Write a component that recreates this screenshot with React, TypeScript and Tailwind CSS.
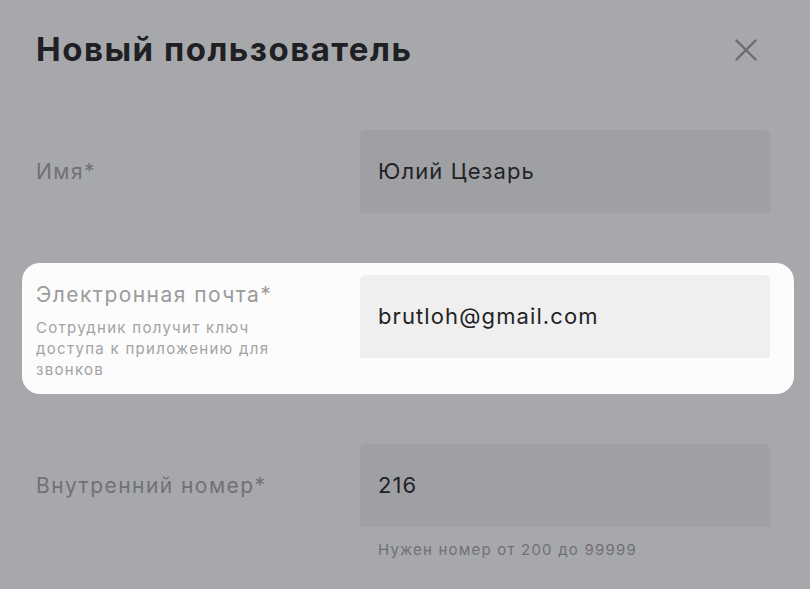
import type { ReactNode } from 'react';

type FieldRowProps = {
  label: string;
  value: string;
  hint?: string;
};

function CloseIcon() {
  return (
    <svg width="22" height="22" viewBox="0 0 22 22" fill="none" className="text-[#6b6c70]">
      <path d="M1.5 1.5L20.5 20.5M20.5 1.5L1.5 20.5" stroke="currentColor" strokeWidth="2.4" strokeLinecap="round" />
    </svg>
  );
}

function Input({ value, light }: { value: string; light?: boolean }) {
  return (
    <div
      className={
        light
          ? 'flex h-[83px] w-[410px] items-center rounded-t-[5px] bg-[#efefef] px-[18px] text-[22px] tracking-[1.1px] text-[#232326]'
          : 'flex h-[83px] w-[410px] items-center rounded-t-[5px] bg-[#9fa0a4] px-[18px] text-[22px] tracking-[1.1px] text-[#232326]'
      }
    >
      {value}
    </div>
  );
}

function FieldRow({ label, value, hint }: FieldRowProps) {
  return (
    <div className="flex items-start">
      <div className="flex h-[83px] w-[324px] items-center text-[21px] tracking-[1.45px] text-[#707175]">{label}</div>
      <div className="flex flex-col">
        <Input value={value} />
        {hint && <p className="mt-[12px] pl-[18px] text-[15px] tracking-[1.2px] text-[#6f7074]">{hint}</p>}
      </div>
    </div>
  );
}

function Highlight({ children }: { children: ReactNode }) {
  return (
    <div className="-ml-[14px] -mr-[24px] rounded-[18px] bg-[#fcfcfc] pt-[12px] pr-[24px] pb-[14px] pl-[14px]">
      {children}
    </div>
  );
}

export default function App() {
  return (
    <div className="h-[589px] w-[810px] overflow-hidden bg-[#a7a8ac] pr-[40px] pl-[36px] font-['Inter',sans-serif]">
      <header className="flex h-[102px] items-center justify-between pb-[2px]">
        <h1 className="text-[33px] font-bold tracking-[1.5px] text-[#202024]">Новый пользователь</h1>
        <span className="mr-[13px]">
          <CloseIcon />
        </span>
      </header>

      <div className="mt-[28px]">
        <FieldRow label="Имя*" value="Юлий Цезарь" />
      </div>

      <div className="mt-[50px]">
        <Highlight>
          <div className="flex items-start">
            <div className="w-[324px] pt-[6px]">
              <p className="text-[21px] leading-[28px] tracking-[1.45px] text-[#9b9b9b]">Электронная почта*</p>
              <p className="mt-[8px] w-[250px] text-[15px] leading-[21px] tracking-[1.3px] text-[#a3a3a3]">
                Сотрудник получит ключ доступа к приложению для звонков
              </p>
            </div>
            <Input value="brutloh@gmail.com" light />
          </div>
        </Highlight>
      </div>

      <div className="mt-[50px]">
        <FieldRow label="Внутренний номер*" value="216" hint="Нужен номер от 200 до 99999" />
      </div>
    </div>
  );
}
